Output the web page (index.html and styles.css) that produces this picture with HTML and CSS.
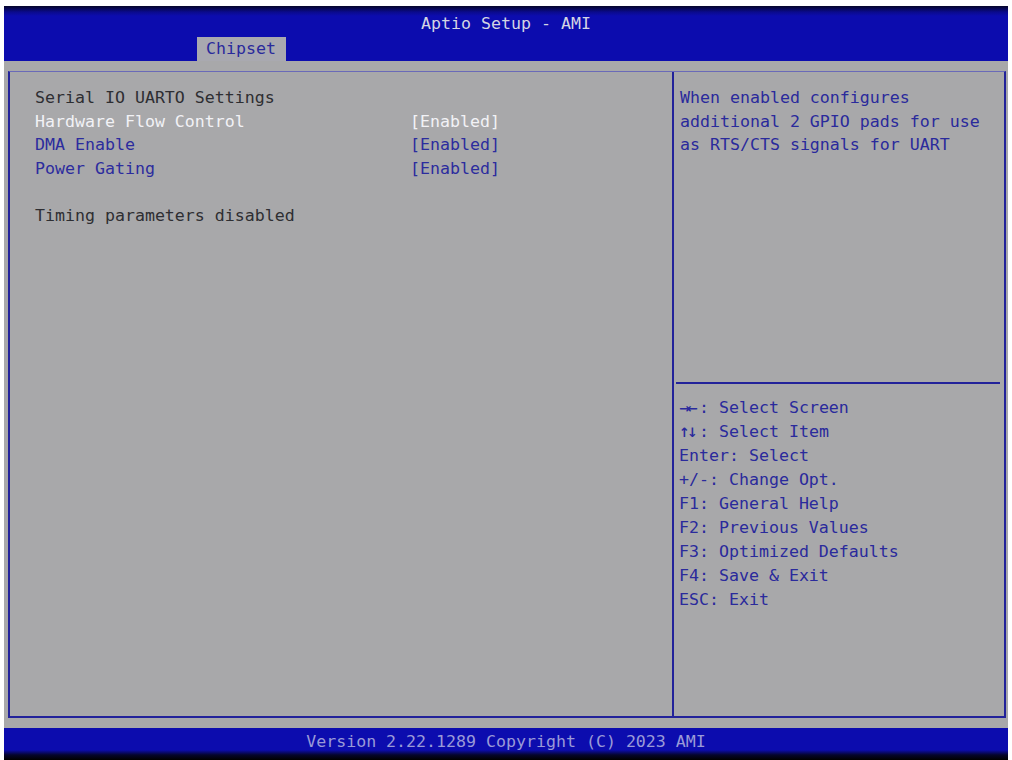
FILE: index.html
```html
<html>
  <head lang="en">
  <meta charset="UTF-8">
  <link rel="stylesheet" href="styles.css">
  </head>
<body>

<div class="screen">
  <div class="top_bar">
    <div class="title">Aptio Setup - AMI</div>
    <div class="tabs">
      <span class="tab active">Chipset</span>
    </div>
  </div>

  <div class="work_area">
    <div class="frame">
      <div class="main_col">
        <div class="row"><span class="label">Serial IO UARTO Settings</span></div>
        <div class="row item selected"><span class="label">Hardware Flow Control</span><span class="value">[Enabled]</span></div>
        <div class="row item"><span class="label">DMA Enable</span><span class="value">[Enabled]</span></div>
        <div class="row item"><span class="label">Power Gating</span><span class="value">[Enabled]</span></div>
        <div class="row blank"></div>
        <div class="row"><span class="label">Timing parameters disabled</span></div>
      </div>

      <div class="side_col">
        <div class="help_text">
          When enabled configures<br>
          additional 2 GPIO pads for use<br>
          as RTS/CTS signals for UART
        </div>
        <div class="key_help">
          <div class="key_line"><span class="arrows">&rarr;&larr;</span>: Select Screen</div>
          <div class="key_line"><span class="arrows">&uarr;&darr;</span>: Select Item</div>
          <div class="key_line">Enter: Select</div>
          <div class="key_line">+/-: Change Opt.</div>
          <div class="key_line">F1: General Help</div>
          <div class="key_line">F2: Previous Values</div>
          <div class="key_line">F3: Optimized Defaults</div>
          <div class="key_line">F4: Save &amp; Exit</div>
          <div class="key_line">ESC: Exit</div>
        </div>
      </div>
    </div>
  </div>

  <div class="bottom_bar">Version 2.22.1289 Copyright (C) 2023 AMI</div>
</div>

</body>
</html>
```

FILE: styles.css
```css
body {
  margin: 0;
  background-color: #ffffff;
  font-family: "DejaVu Sans Mono", "Liberation Mono", monospace;
  font-size: 16.6px;
}

.screen {
  margin: 6px 0 0 4px;
  width: 1004px;
  height: 754px;
  display: flex;
  flex-direction: column;
  background: #a8a8aa;
}

.top_bar {
  height: 55px;
  background: linear-gradient(to bottom, #05052a 0px, #0a0a8c 6px, #0c0cae 10px, #0c0cae 100%);
  display: flex;
  flex-direction: column;
  justify-content: space-between;
}

.title {
  color: #d4d4e4;
  text-align: center;
  padding-top: 6px;
  line-height: 24px;
}

.tabs {
  display: flex;
  padding-left: 193px;
}

.tab {
  height: 24px;
  line-height: 24px;
  padding: 0 10px 0 9px;
  color: #2a2a9c;
  background: #a9a9b0;
}

.work_area {
  flex: 1;
  padding: 10px 2px 10px 4px;
  display: flex;
}

.frame {
  flex: 1;
  display: flex;
  border: 2px solid #22229a;
  border-top: 1px solid #6a6ab8;
}

.main_col {
  width: 664px;
  border-right: 2px solid #22229a;
  padding: 14px 0 0 25px;
  box-sizing: border-box;
}

.row {
  display: flex;
  height: 23.6px;
  line-height: 23.6px;
  color: #2e2e32;
}

.row .label {
  width: 375px;
}

.row.item {
  color: #2c2c9e;
}

.row.selected {
  color: #f2f2f6;
}

.row.blank {
  height: 23.6px;
}

.side_col {
  flex: 1;
  display: flex;
  flex-direction: column;
}

.help_text {
  height: 312px;
  padding: 14px 0 0 4px;
  line-height: 23.6px;
  color: #2a2a9c;
  border-bottom: 2px solid #22229a;
  margin: 0 4px 0 2px;
  box-sizing: border-box;
}

.key_help {
  padding: 12px 0 0 5px;
  color: #2a2a9c;
}

.key_line {
  height: 24px;
  line-height: 24px;
  overflow: hidden;
}

.arrows {
  display: inline-block;
  width: 20px;
  line-height: 20px;
  font-family: "DejaVu Sans", sans-serif;
  font-size: 13px;
  font-weight: bold;
  letter-spacing: -3px;
}

.bottom_bar {
  height: 32px;
  line-height: 28px;
  text-align: center;
  color: #9a9ad8;
  background: linear-gradient(to bottom, #0c0cae 0px, #0c0cae 22px, #05052a 27px, #000000 100%);
}
```
